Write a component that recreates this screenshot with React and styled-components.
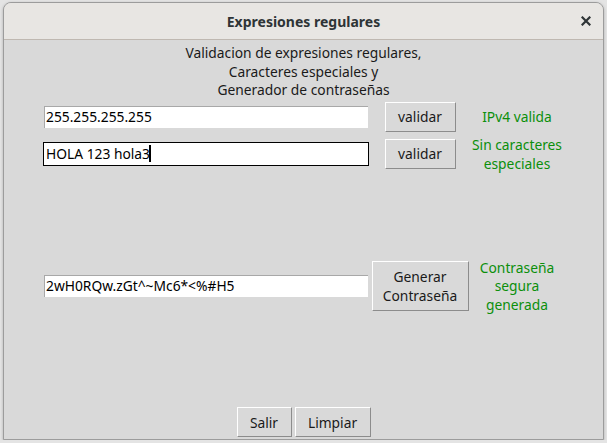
import React from "react";
import styled, { createGlobalStyle } from "styled-components";

const GlobalStyle = createGlobalStyle`
  html, body {
    margin: 0;
    padding: 0;
    background: #e4e4e4;
  }
  body {
    font-family: "Noto Sans", "Open Sans", sans-serif;
    padding: 2px 3px 0 3px;
  }
`;

const Window = styled.div`
  width: 601px;
  height: 438px;
  box-sizing: border-box;
  display: flex;
  flex-direction: column;
  border: 1px solid #9c9c9c;
  border-radius: 8px 8px 0 0;
  background: #d9d9d9;
  overflow: hidden;
  box-shadow: 0 1px 3px rgba(0, 0, 0, 0.25);
`;

const TitleBar = styled.div`
  height: 36px;
  flex: none;
  display: flex;
  align-items: center;
  justify-content: center;
  position: relative;
  background: #e8e6e3;
  border-bottom: 1px solid #bfb8b1;
  color: #2e3436;
  font-size: 14px;
  font-weight: bold;
`;

const CloseButton = styled.div`
  position: absolute;
  right: 12px;
  top: 13px;
  width: 10px;
  height: 10px;
  display: flex;
`;

const Body = styled.div`
  flex: 1;
  display: flex;
  flex-direction: column;
  padding: 4px 0 2px 39px;
`;

const Heading = styled.div`
  align-self: center;
  margin-left: -39px;
  text-align: center;
  font-size: 13.8px;
  line-height: 18.5px;
  color: #1a1a1a;
`;

const Row = styled.div`
  display: grid;
  grid-template-columns: 328px 98px 96px;
  grid-template-rows: ${(p) => p.$height}px;
  align-items: center;
  margin-top: ${(p) => p.$top}px;
`;

const Field = styled.div`
  width: 326px;
  height: 24px;
  box-sizing: border-box;
  display: flex;
  align-items: center;
  padding-left: 2px;
  background: #ffffff;
  border: 1px solid ${(p) => (p.$focused ? "#000000" : "#d9d9d9")};
  box-shadow: ${(p) =>
    p.$focused ? "none" : "inset 1px 1px 0 #a8a8a8"};
  font-size: 13.8px;
  color: #000;
  white-space: pre;
`;

const Caret = styled.span`
  display: inline-block;
  width: 2px;
  height: 17px;
  background: #000;
  margin-left: -1px;
`;

const Button = styled.button`
  justify-self: center;
  height: ${(p) => p.$height || 30}px;
  width: ${(p) => p.$width}px;
  box-sizing: border-box;
  padding: 0;
  background: #d9d9d9;
  border: 1px solid;
  border-color: #ffffff #8c8c8c #8c8c8c #ffffff;
  font-family: inherit;
  font-size: 13.8px;
  line-height: 19px;
  color: #1a1a1a;
`;

const Status = styled.div`
  text-align: center;
  padding-top: 2px;
  font-size: 13.8px;
  line-height: 18.5px;
  color: #0b8f0b;
`;

const Footer = styled.div`
  margin-top: auto;
  margin-left: -39px;
  display: flex;
  justify-content: center;
  gap: 3px;
`;

export default function App() {
  return (
    <>
      <GlobalStyle />
      <Window>
        <TitleBar>
          Expresiones regulares
          <CloseButton>
            <svg width="10" height="10" viewBox="0 0 10 10">
              <path
                d="M1.5 1.5 L8.5 8.5 M8.5 1.5 L1.5 8.5"
                stroke="#2e3436"
                strokeWidth="2.2"
                strokeLinecap="square"
              />
            </svg>
          </CloseButton>
        </TitleBar>
        <Body>
          <Heading>
            Validacion de expresiones regulares,
            <br />
            Caracteres especiales y
            <br />
            Generador de contraseñas
          </Heading>

          <Row $height={30} $top={2}>
            <Field>255.255.255.255</Field>
            <Button $width={71}>validar</Button>
            <Status>IPv4 valida</Status>
          </Row>

          <Row $height={30} $top={7}>
            <Field $focused>
              HOLA 123 hola3
              <Caret />
            </Field>
            <Button $width={71}>validar</Button>
            <Status>
              Sin caracteres
              <br />
              especiales
            </Status>
          </Row>

          <Row $height={50} $top={92}>
            <Field>2wH0RQw.zGt^~Mc6*&lt;%#H5</Field>
            <Button $width={97} $height={50}>
              Generar
              <br />
              Contraseña
            </Button>
            <Status>
              Contraseña
              <br />
              segura
              <br />
              generada
            </Status>
          </Row>

          <Footer>
            <Button $width={55}>Salir</Button>
            <Button $width={76}>Limpiar</Button>
          </Footer>
        </Body>
      </Window>
    </>
  );
}
